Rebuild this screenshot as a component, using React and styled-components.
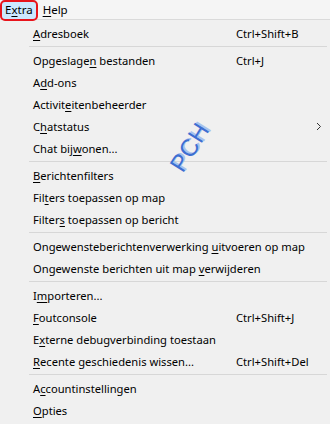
import styled, { createGlobalStyle } from 'styled-components';

const GlobalStyle = createGlobalStyle`
  html, body {
    margin: 0;
    padding: 0;
    background: #f0f0f0;
  }
  body {
    font-family: "Noto Sans", "DejaVu Sans", sans-serif;
    font-size: 11.2px;
    color: #000;
  }
`;

const Window = styled.div`
  position: relative;
  width: 330px;
  height: 424px;
  overflow: hidden;
  background: #f0f0f0;
`;

const MenuBar = styled.div`
  display: flex;
  align-items: stretch;
  height: 19px;
  padding-left: 2px;
  border-bottom: 1px solid #dadada;
  background: #f5f5f5;
  font-size: 11.5px;
`;

const BarItem = styled.div`
  position: relative;
  display: flex;
  align-items: center;
  padding: 0 3px 0 3px;
  margin-right: 4px;
  background: ${({ $active }) => ($active ? '#cce8ff' : 'transparent')};

  ${({ $active }) =>
    $active &&
    `&::after {
      content: '';
      position: absolute;
      left: -2px;
      top: 0;
      right: -2px;
      bottom: -2px;
      border: 2px solid #e8141c;
      border-radius: 5px;
    }`}
`;

const Menu = styled.div`
  display: flex;
  flex-direction: column;
  padding-top: 2px;
`;

const Item = styled.div`
  display: grid;
  grid-template-columns: 33px 203px 1fr 14px;
  align-items: center;
  height: 22px;
  white-space: nowrap;
`;

const Label = styled.span`
  grid-column: 2;
  overflow: visible;
`;

const Shortcut = styled.span`
  grid-column: 3;
`;

const Arrow = styled.span`
  grid-column: 4;
  display: flex;
  align-items: center;
  color: #333;
`;

const Separator = styled.div`
  height: 5px;
  display: flex;
  align-items: flex-start;
  padding: 2px 3px 0 29px;
  box-sizing: border-box;

  &::before {
    content: '';
    flex: 1;
    height: 1px;
    background: #d7d7d7;
  }
`;

const Key = styled.u`
  text-decoration: underline;
  text-underline-offset: 2px;
`;

const Watermark = styled.div`
  position: absolute;
  left: 164px;
  top: 162px;
  font-family: "Liberation Sans", Arial, sans-serif;
  font-size: 24px;
  color: #3d6fd1;
  letter-spacing: 0.5px;
  transform: rotate(-58deg);
  transform-origin: left top;
  text-shadow: 2px 1px 0 #a8c1ee;
  pointer-events: none;
`;

function Mn({ text, at, len = 1 }) {
  return (
    <>
      {text.slice(0, at)}
      <Key>{text.slice(at, at + len)}</Key>
      {text.slice(at + len)}
    </>
  );
}

const groups = [
  [
    { label: 'Adresboek', at: 0, shortcut: 'Ctrl+Shift+B' },
  ],
  [
    { label: 'Opgeslagen bestanden', at: 9, shortcut: 'Ctrl+J' },
    { label: 'Add-ons', at: 1 },
    { label: 'Activiteitenbeheerder', at: 7 },
    { label: 'Chatstatus', at: 1, submenu: true },
    { label: 'Chat bijwonen...', at: 8 },
  ],
  [
    { label: 'Berichtenfilters', at: 0 },
    { label: 'Filters toepassen op map', at: 3 },
    { label: 'Filters toepassen op bericht', at: 6 },
  ],
  [
    { label: 'Ongewensteberichtenverwerking uitvoeren op map', at: 30 },
    { label: 'Ongewenste berichten uit map verwijderen', at: 29 },
  ],
  [
    { label: 'Importeren...', at: 1 },
    { label: 'Foutconsole', at: 0, shortcut: 'Ctrl+Shift+J' },
    { label: 'Externe debugverbinding toestaan', at: 1 },
    { label: 'Recente geschiedenis wissen...', at: 0, shortcut: 'Ctrl+Shift+Del' },
  ],
  [
    { label: 'Accountinstellingen', at: 1 },
    { label: 'Opties', at: 0 },
  ],
];

export default function App() {
  return (
    <Window>
      <GlobalStyle />
      <MenuBar>
        <BarItem $active><Mn text="Extra" at={1} /></BarItem>
        <BarItem><Mn text="Help" at={0} /></BarItem>
      </MenuBar>
      <Menu>
        {groups.map((group, gi) => (
          <div key={gi}>
            {gi > 0 && <Separator />}
            {group.map((item) => (
              <Item key={item.label}>
                <Label><Mn text={item.label} at={item.at} /></Label>
                {item.shortcut && <Shortcut>{item.shortcut}</Shortcut>}
                {item.submenu && (
                  <Arrow>
                    <svg width="6" height="9" viewBox="0 0 6 9">
                      <path d="M1 1 L4.5 4.5 L1 8" fill="none" stroke="#333" strokeWidth="1" />
                    </svg>
                  </Arrow>
                )}
              </Item>
            ))}
          </div>
        ))}
      </Menu>
      <Watermark>PCH</Watermark>
    </Window>
  );
}
